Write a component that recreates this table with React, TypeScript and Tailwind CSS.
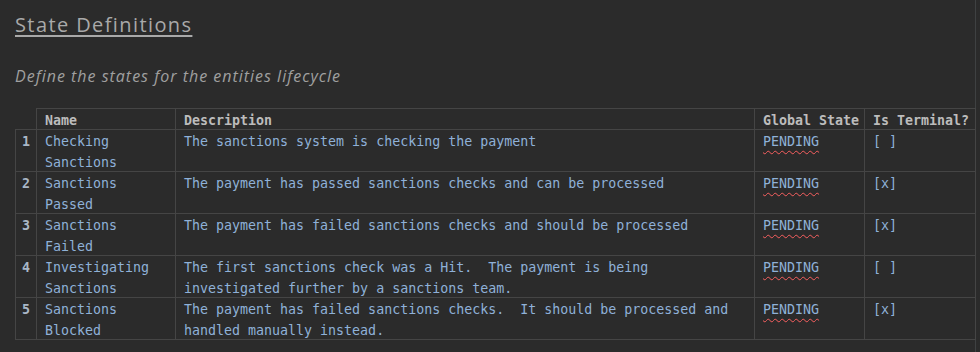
import React from 'react';

const states = [
  { id: 1, name: ['Checking', 'Sanctions'], desc: ['The sanctions system is checking the payment'], global: 'PENDING', terminal: false },
  { id: 2, name: ['Sanctions', 'Passed'], desc: ['The payment has passed sanctions checks and can be processed'], global: 'PENDING', terminal: true },
  { id: 3, name: ['Sanctions', 'Failed'], desc: ['The payment has failed sanctions checks and should be processed'], global: 'PENDING', terminal: true },
  {
    id: 4,
    name: ['Investigating', 'Sanctions'],
    desc: ['The first sanctions check was a Hit.  The payment is being', 'investigated further by a sanctions team.'],
    global: 'PENDING',
    terminal: false,
  },
  {
    id: 5,
    name: ['Sanctions', 'Blocked'],
    desc: ['The payment has failed sanctions checks.  It should be processed and', 'handled manually instead.'],
    global: 'PENDING',
    terminal: true,
  },
];

const mono = "font-['DejaVu_Sans_Mono',monospace] text-[13.3px] leading-[20px]";

// cell body: fixed 41px box, lines of 21px may run slightly past it like the editor does
const Cell = ({ lines, className = '' }: { lines: string[]; className?: string }) => (
  <td className="border border-[#454545] p-0">
    <div className={`h-[41px] px-2 pt-[1px] whitespace-pre ${className}`}>
      {lines.map(l => (
        <div key={l} className="leading-[21px]">{l}</div>
      ))}
    </div>
  </td>
);

const App = () => {
  return (
    <div className="flex h-[352px] w-full bg-[#2b2b2b]">
      <div className="w-[976px] shrink-0 border-r border-[#3f4142] pl-[15px] pt-[11px]">
        <h2 className="font-['Open_Sans',sans-serif] text-[20px] font-medium leading-[28px] tracking-[1.4px] text-[#a9a9a9] underline decoration-[1.5px] underline-offset-[3px]">
          State Definitions
        </h2>
        <p className="mt-[27px] font-['Open_Sans',sans-serif] text-[16px] italic leading-[20px] tracking-[1px] text-[#a0a0a0]">
          Define the states for the entities lifecycle
        </p>
        <table className={`mt-[22px] w-[960px] table-fixed border-collapse ${mono}`}>
          <colgroup>
            <col className="w-[21px]" />
            <col className="w-[139px]" />
            <col className="w-[579px]" />
            <col className="w-[110px]" />
            <col className="w-[111px]" />
          </colgroup>
          <thead>
            <tr className="h-[21px] text-left font-bold text-[#bcbcbc]">
              <th className="border-0 p-0"></th>
              <th className="border border-[#454545] pt-[3px] pb-0 pl-2 pr-0 align-middle font-bold leading-[17px] whitespace-nowrap">Name</th>
              <th className="border border-[#454545] pt-[3px] pb-0 pl-2 pr-0 align-middle font-bold leading-[17px] whitespace-nowrap">Description</th>
              <th className="border border-[#454545] pt-[3px] pb-0 pl-2 pr-0 align-middle font-bold leading-[17px] whitespace-nowrap">Global State</th>
              <th className="border border-[#454545] pt-[3px] pb-0 pl-2 pr-0 align-middle font-bold leading-[17px] whitespace-nowrap">Is Terminal?</th>
            </tr>
          </thead>
          <tbody className="text-[#8fb1d8]">
            {states.map(s => (
              <tr key={s.id} className="align-top">
                <td className="border border-[#454545] p-0 text-center font-bold text-[#a9b7c6]">
                  <div className="h-[41px] pt-[1px] leading-[21px]">{s.id}</div>
                </td>
                <Cell lines={s.name} />
                <Cell lines={s.desc} />
                <td className="border border-[#454545] p-0">
                  <div className="h-[41px] px-2 pt-[1px] leading-[21px]">
                    <span className="underline decoration-[#f75f5f] decoration-wavy decoration-1 underline-offset-[4px]">
                      {s.global}
                    </span>
                  </div>
                </td>
                <Cell lines={[s.terminal ? '[x]' : '[ ]']} />
              </tr>
            ))}
          </tbody>
        </table>
      </div>
      <div className="flex-1 bg-[#2b2b2b]"></div>
    </div>
  );
};

export default App;
